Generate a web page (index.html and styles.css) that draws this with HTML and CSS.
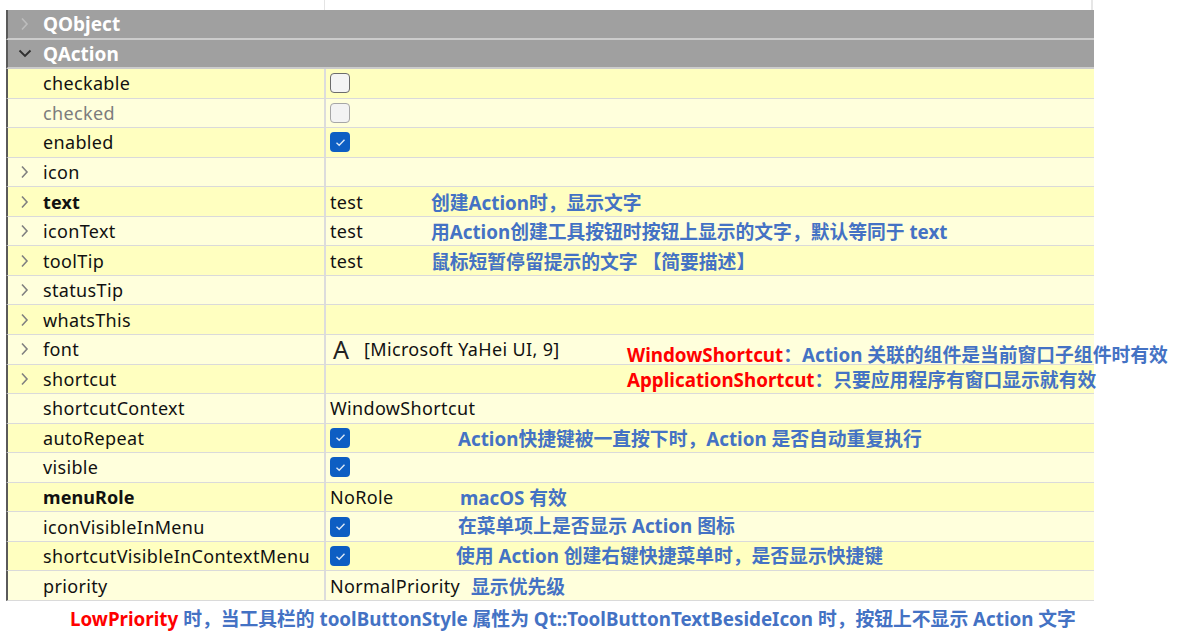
FILE: index.html
```html
<!DOCTYPE html>
<html lang="zh-CN">
<head>
<meta charset="utf-8">
<title>QAction properties</title>
<link rel="stylesheet" href="styles.css">
</head>
<body>
<div class="sheet">
  <div class="table">
    <div class="row top"><div class="name"></div><div class="val"></div></div>

    <div class="row group">
      <div class="name"><span class="arrow"><svg width="9" height="14" viewBox="0 0 9 14"><polyline points="2,1.5 7,7 2,12.5" class="chev light"/></svg></span><span class="label">QObject</span></div>
      <div class="val"></div>
    </div>
    <div class="row group">
      <div class="name"><span class="arrow"><svg width="14" height="9" viewBox="0 0 14 9"><polyline points="1.5,1.5 7,7 12.5,1.5" class="chev dark"/></svg></span><span class="label">QAction</span></div>
      <div class="val"></div>
    </div>

    <div class="row a">
      <div class="name"><span class="arrow"></span><span class="label">checkable</span></div>
      <div class="val"><span class="cb"></span></div>
    </div>
    <div class="row b">
      <div class="name"><span class="arrow"></span><span class="label dim">checked</span></div>
      <div class="val"><span class="cb disabled"></span></div>
    </div>
    <div class="row a">
      <div class="name"><span class="arrow"></span><span class="label">enabled</span></div>
      <div class="val"><span class="cb on"><svg width="11" height="9" viewBox="0 0 11 9"><polyline points="1.5,4.8 4.2,7.3 9.5,1.8"/></svg></span></div>
    </div>
    <div class="row b">
      <div class="name"><span class="arrow"><svg width="9" height="14" viewBox="0 0 9 14"><polyline points="2,1.5 7,7 2,12.5" class="chev"/></svg></span><span class="label">icon</span></div>
      <div class="val"></div>
    </div>
    <div class="row a">
      <div class="name"><span class="arrow"><svg width="9" height="14" viewBox="0 0 9 14"><polyline points="2,1.5 7,7 2,12.5" class="chev"/></svg></span><span class="label bold">text</span></div>
      <div class="val"><span class="vtext">test</span><span class="note n-text">创建Action时，显示文字</span></div>
    </div>
    <div class="row b">
      <div class="name"><span class="arrow"><svg width="9" height="14" viewBox="0 0 9 14"><polyline points="2,1.5 7,7 2,12.5" class="chev"/></svg></span><span class="label">iconText</span></div>
      <div class="val"><span class="vtext">test</span><span class="note n-text">用Action创建工具按钮时按钮上显示的文字，默认等同于 text</span></div>
    </div>
    <div class="row a">
      <div class="name"><span class="arrow"><svg width="9" height="14" viewBox="0 0 9 14"><polyline points="2,1.5 7,7 2,12.5" class="chev"/></svg></span><span class="label">toolTip</span></div>
      <div class="val"><span class="vtext">test</span><span class="note n-text">鼠标短暂停留提示的文字 【简要描述】</span></div>
    </div>
    <div class="row b">
      <div class="name"><span class="arrow"><svg width="9" height="14" viewBox="0 0 9 14"><polyline points="2,1.5 7,7 2,12.5" class="chev"/></svg></span><span class="label">statusTip</span></div>
      <div class="val"></div>
    </div>
    <div class="row a">
      <div class="name"><span class="arrow"><svg width="9" height="14" viewBox="0 0 9 14"><polyline points="2,1.5 7,7 2,12.5" class="chev"/></svg></span><span class="label">whatsThis</span></div>
      <div class="val"></div>
    </div>
    <div class="row b">
      <div class="name"><span class="arrow"><svg width="9" height="14" viewBox="0 0 9 14"><polyline points="2,1.5 7,7 2,12.5" class="chev"/></svg></span><span class="label">font</span></div>
      <div class="val"><span class="fontA">A</span><span class="vtext">[Microsoft YaHei UI, 9]</span>
        <div class="note n-shortcut">
          <div class="nline"><span class="red">WindowShortcut</span>：Action 关联的组件是当前窗口子组件时有效</div>
          <div class="nline"><span class="red">ApplicationShortcut</span>：只要应用程序有窗口显示就有效</div>
        </div>
      </div>
    </div>
    <div class="row a">
      <div class="name"><span class="arrow"><svg width="9" height="14" viewBox="0 0 9 14"><polyline points="2,1.5 7,7 2,12.5" class="chev"/></svg></span><span class="label">shortcut</span></div>
      <div class="val"></div>
    </div>
    <div class="row b">
      <div class="name"><span class="arrow"></span><span class="label">shortcutContext</span></div>
      <div class="val"><span class="vtext">WindowShortcut</span></div>
    </div>
    <div class="row a">
      <div class="name"><span class="arrow"></span><span class="label">autoRepeat</span></div>
      <div class="val"><span class="cb on"><svg width="11" height="9" viewBox="0 0 11 9"><polyline points="1.5,4.8 4.2,7.3 9.5,1.8"/></svg></span><span class="note n-auto">Action快捷键被一直按下时，Action 是否自动重复执行</span></div>
    </div>
    <div class="row b">
      <div class="name"><span class="arrow"></span><span class="label">visible</span></div>
      <div class="val"><span class="cb on"><svg width="11" height="9" viewBox="0 0 11 9"><polyline points="1.5,4.8 4.2,7.3 9.5,1.8"/></svg></span></div>
    </div>
    <div class="row a">
      <div class="name"><span class="arrow"></span><span class="label bold">menuRole</span></div>
      <div class="val"><span class="vtext">NoRole</span><span class="note n-mac">macOS 有效</span></div>
    </div>
    <div class="row b">
      <div class="name"><span class="arrow"></span><span class="label">iconVisibleInMenu</span></div>
      <div class="val"><span class="cb on"><svg width="11" height="9" viewBox="0 0 11 9"><polyline points="1.5,4.8 4.2,7.3 9.5,1.8"/></svg></span><span class="note n-icon">在菜单项上是否显示 Action 图标</span></div>
    </div>
    <div class="row a">
      <div class="name"><span class="arrow"></span><span class="label">shortcutVisibleInContextMenu</span></div>
      <div class="val"><span class="cb on"><svg width="11" height="9" viewBox="0 0 11 9"><polyline points="1.5,4.8 4.2,7.3 9.5,1.8"/></svg></span><span class="note n-ctx">使用 Action 创建右键快捷菜单时，是否显示快捷键</span></div>
    </div>
    <div class="row b">
      <div class="name"><span class="arrow"></span><span class="label">priority</span></div>
      <div class="val"><span class="vtext">NormalPriority</span><span class="inline-note">显示优先级</span></div>
    </div>
  </div>
  <p class="footnote"><span class="red">LowPriority</span> 时，当工具栏的 toolButtonStyle 属性为 Qt::ToolButtonTextBesideIcon 时，按钮上不显示 Action 文字</p>
</div>
</body>
</html>
```
FILE: styles.css
```css
html, body {
  margin: 0;
  padding: 0;
  background: #ffffff;
}

.sheet {
  width: 1180px;
  height: 636px;
  overflow: hidden;
  font-family: "Noto Sans", "Noto Sans CJK SC", sans-serif;
}

.table {
  width: 1088px;
  margin-left: 6px;
  display: flex;
  flex-direction: column;
}

.row {
  display: grid;
  grid-template-columns: 316px 1fr;
  height: 29.55px;
  box-sizing: border-box;
  border-left: 2px solid #5a5a5a;
  border-bottom: 1px solid #dadada;
}

.row.top {
  height: 10px;
  border-left: none;
  border-bottom: none;
  margin-left: 2px;
}
.row.top .val {
  border-left: 1px solid #e4e4e4;
  border-right: 2px solid #e6e6e6;
  margin-right: 1px;
}

.row.group {
  background: #a0a0a0;
  border-bottom: 2px solid #cccccc;
}
.row.group .val {
  border-left: none;
}
.row.group .label {
  color: #ffffff;
  font-weight: 700;
  font-size: 19px;
  letter-spacing: 0;
  padding-top: 1px;
}

.row.a { background: #ffffc0; }
.row.b { background: #ffffdc; }

.name {
  display: flex;
  align-items: center;
}

.arrow {
  width: 35px;
  flex: none;
  display: flex;
  align-items: center;
  justify-content: center;
  padding-right: 2px;
  box-sizing: border-box;
}

.chev {
  fill: none;
  stroke: #808080;
  stroke-width: 1.6;
}
.chev.light { stroke: #bdbdbd; }
.chev.dark { stroke: #303030; stroke-width: 1.9; }

.label {
  font-size: 18px;
  color: #111111;
  white-space: nowrap;
  letter-spacing: 0.35px;
}
.label.bold { font-weight: 700; letter-spacing: 0.1px; }
.label.dim { color: #7c7c7c; }

.val {
  position: relative;
  display: flex;
  align-items: center;
  border-left: 2px solid #dcdcdc;
  padding-left: 4px;
  white-space: nowrap;
}

.vtext {
  font-size: 18px;
  color: #111111;
  letter-spacing: 0.35px;
}

.fontA {
  font-size: 25px;
  line-height: 1;
  color: #222222;
  margin: 0 15px 0 3px;
  font-family: "Noto Sans", sans-serif;
}

.cb {
  width: 20px;
  height: 20px;
  box-sizing: border-box;
  border-radius: 4px;
  border: 1.5px solid #6c6c6c;
  background: #f4f4f4;
  display: flex;
  align-items: center;
  justify-content: center;
}
.cb.disabled {
  border-color: #a6a6a6;
  background: #f3f3f3;
}
.cb.on {
  border: none;
  background: #0d5ec3;
}
.cb.on polyline {
  fill: none;
  stroke: #dce8f7;
  stroke-width: 1.4;
}

.note {
  position: absolute;
  top: 50%;
  transform: translateY(-50%);
  font-size: 18.8px;
  font-weight: 700;
  color: #4472c4;
  white-space: nowrap;
}
.n-text { left: 105px; }
.n-auto { left: 132px; }
.n-mac { left: 134px; }
.n-icon { left: 132px; top: 45%; }
.n-ctx { left: 130px; top: 45%; }
.n-shortcut {
  left: 301px;
  top: 8px;
  transform: none;
  display: flex;
  flex-direction: column;
}
.nline {
  line-height: 25px;
  height: 25px;
}

.inline-note {
  font-size: 18.8px;
  font-weight: 700;
  color: #4472c4;
  margin-left: 11px;
}

.red { color: #ff0000; }

.footnote {
  margin: 6px 0 0 70px;
  font-size: 18.8px;
  font-weight: 700;
  color: #4472c4;
  line-height: 24px;
  white-space: nowrap;
}
```
